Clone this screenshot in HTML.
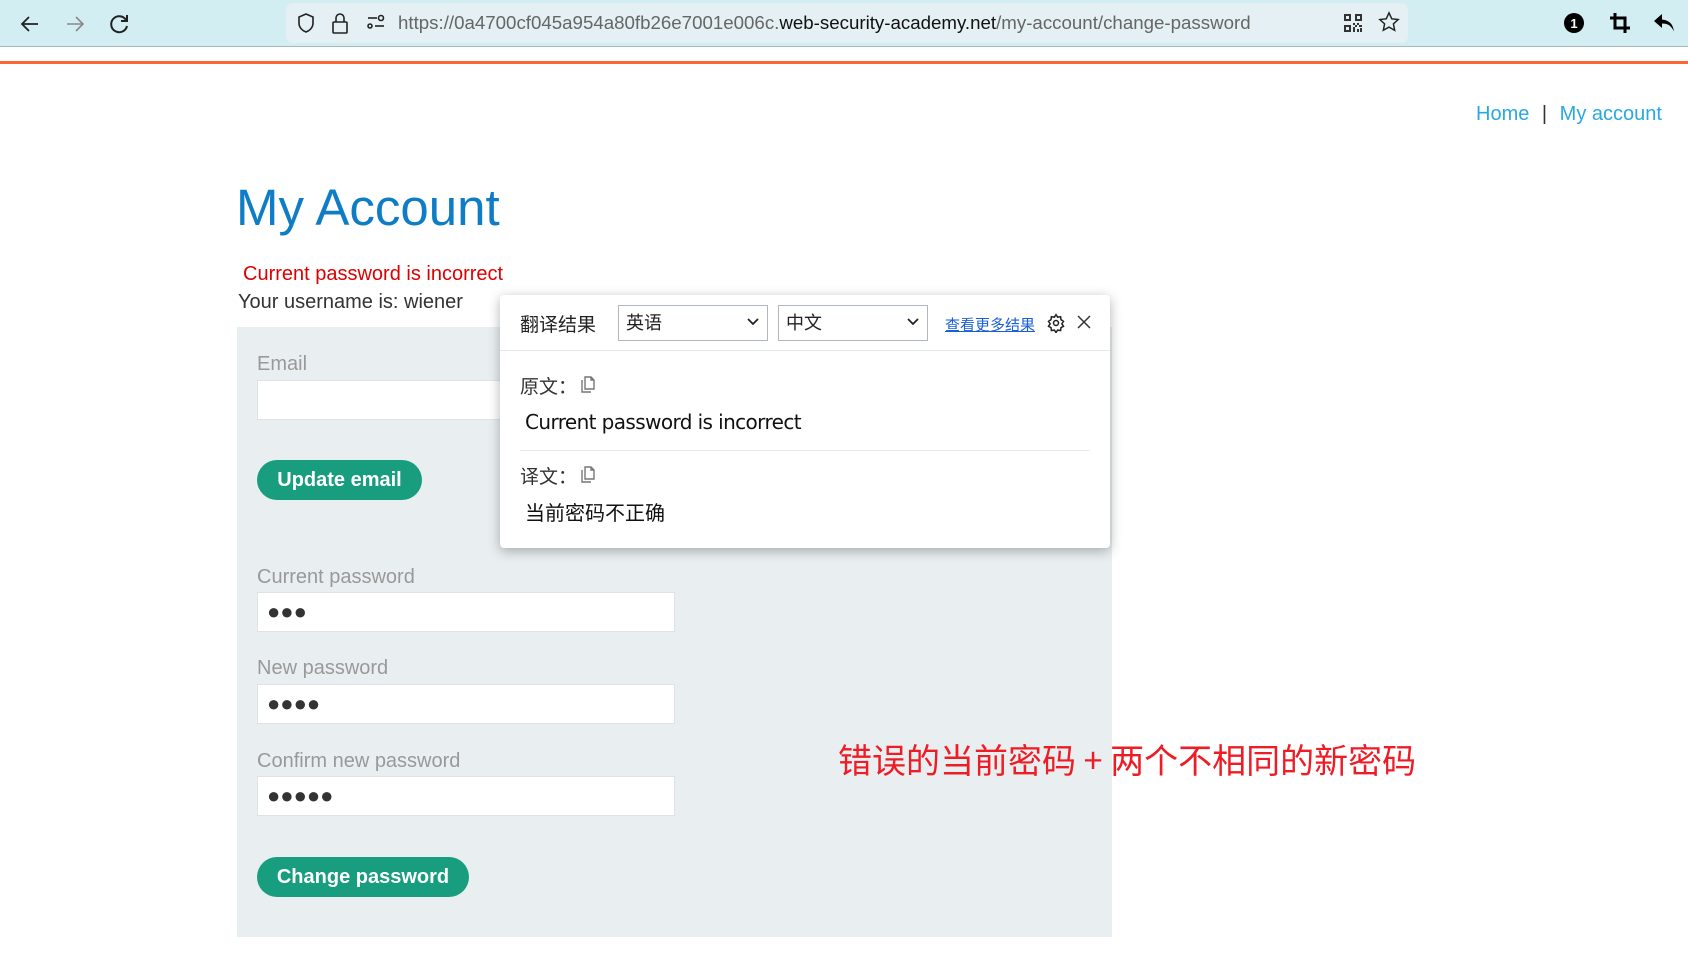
<!DOCTYPE html>
<html><head><meta charset="utf-8"><style>
*{margin:0;padding:0;box-sizing:border-box}
body{width:1688px;height:954px;position:relative;background:#fff;font-family:"Liberation Sans","Noto Sans CJK SC",sans-serif;overflow:hidden}
.a{position:absolute}
.lbl{position:absolute;left:257px;color:#999;font-size:20px}
.inp{position:absolute;left:257px;width:418px;height:40px;background:#fff;border:1px solid #dfe3e6;font-size:22px;color:#333;padding-left:9px;line-height:38px;letter-spacing:0}
.btn{position:absolute;left:257px;height:40px;border-radius:20px;background:#189d7f;color:#fff;font-weight:bold;font-size:20px;line-height:40px;text-align:center}
.sel{position:absolute;top:305px;height:36px;width:150px;border:1px solid #b0b8c4;background:#fff;font-size:18px;line-height:34px;padding-left:7px;color:#222}
.sel svg{position:absolute;right:8px;top:12px}
</style></head><body>
<div class="a" style="left:0;top:0;width:1688px;height:47px;background:#d3eef3;border-bottom:1px solid #a8b8bc"></div>
<svg class="a" style="left:18px;top:12px" width="24" height="24" viewBox="0 0 24 24" fill="none" stroke="#222" stroke-width="1.8"><path d="M20 12H5M11 5l-7 7 7 7"/></svg>
<svg class="a" style="left:63px;top:12px" width="24" height="24" viewBox="0 0 24 24" fill="none" stroke="#888" stroke-width="1.6"><path d="M4 12h15M13 5l7 7-7 7"/></svg>
<svg class="a" style="left:108px;top:12px" width="24" height="24" viewBox="0 0 24 24" fill="none" stroke="#222" stroke-width="2"><path d="M18 8a8 8 0 1 0 1 6"/><path d="M19 3v6h-6"/></svg>
<div class="a" style="left:286px;top:3px;width:1122px;height:40px;background:#e4f0f3;border-radius:7px"></div>
<svg class="a" style="left:296px;top:12px" width="20" height="22" viewBox="0 0 20 22" fill="none" stroke="#222" stroke-width="1.6"><path d="M10 2l7 3v6c0 5-4 8-7 9-3-1-7-4-7-9V5z"/></svg>
<svg class="a" style="left:331px;top:11px" width="18" height="24" viewBox="0 0 18 24" fill="none" stroke="#222" stroke-width="1.6"><rect x="2" y="11" width="14" height="11" rx="1"/><path d="M5 11V7a4 4 0 0 1 8 0v4"/></svg>
<svg class="a" style="left:366px;top:14px" width="20" height="16" viewBox="0 0 20 16" fill="none" stroke="#222" stroke-width="1.6"><path d="M2 4h9"/><circle cx="15" cy="4" r="2.5"/><circle cx="4" cy="12" r="2"/><path d="M9 12h9"/></svg>
<div class="a" style="left:398px;top:12px;font-size:18.7px;color:#666;white-space:nowrap">https://0a4700cf045a954a80fb26e7001e006c.<span style="color:#111">web-security-academy.net</span>/my-account/change-password</div>
<svg class="a" style="left:1344px;top:14px" width="18" height="18" viewBox="0 0 18 18" fill="#333"><path d="M0 0h7v7H0zM2 2v3h3V2zM11 0h7v7h-7zM13 2v3h3V2zM0 11h7v7H0zM2 13v3h3v-3zM9 9h2v2H9zM13 9h2v2h-2zM11 11h2v2h-2zM15 11h3v2h-3zM9 13h2v5H9zM13 15h2v3h-2zM16 14h2v4h-2z"/></svg>
<svg class="a" style="left:1378px;top:11px" width="22" height="22" viewBox="0 0 24 24" fill="none" stroke="#222" stroke-width="1.6"><path d="M12 2l3 6.5 7 .8-5.2 4.8 1.4 7L12 17.6 5.8 21l1.4-7L2 9.3l7-.8z"/></svg>
<svg class="a" style="left:1563px;top:12px" width="22" height="22" viewBox="0 0 22 22"><circle cx="11" cy="11" r="10" fill="#000"/><text x="11" y="16" font-size="13" font-weight="bold" fill="#fff" text-anchor="middle" font-family="Liberation Sans">1</text></svg>
<svg class="a" style="left:1609px;top:12px" width="22" height="22" viewBox="0 0 22 22" fill="none" stroke="#000" stroke-width="3"><path d="M6 1v15h15M1 6h15v15"/></svg>
<svg class="a" style="left:1653px;top:12px" width="24" height="22" viewBox="0 0 24 22"><path d="M9 2L1 9l8 7v-4.5c6 0 9 2 12 8-1-7-4-11-12-12z" fill="#000"/></svg>
<div class="a" style="left:0;top:61px;width:1688px;height:3px;background:#ff6633"></div>

<div class="a" style="left:1476px;top:103px;font-size:20px;color:#29a9e1;white-space:nowrap">Home <span style="color:#333;margin:0 7px">|</span> My account</div>
<div class="a" style="left:236px;top:178px;font-size:51px;color:#0f7dc6">My Account</div>
<div class="a" style="left:243px;top:263px;font-size:20px;color:#d00">Current password is incorrect</div>
<div class="a" style="left:238px;top:291px;font-size:20px;color:#333">Your username is: wiener</div>

<div class="a" style="left:237px;top:327px;width:875px;height:610px;background:#e9eff1"></div>
<div class="lbl" style="top:353px">Email</div>
<div class="inp" style="top:380px"></div>
<div class="btn" style="top:460px;width:165px">Update email</div>
<div class="lbl" style="top:566px">Current password</div>
<div class="inp" style="top:592px">●●●</div>
<div class="lbl" style="top:657px">New password</div>
<div class="inp" style="top:684px">●●●●</div>
<div class="lbl" style="top:750px">Confirm new password</div>
<div class="inp" style="top:776px">●●●●●</div>
<div class="btn" style="top:857px;width:212px">Change password</div>

<div class="a" style="left:838px;top:734px;font-size:34px;color:#ee1c25;white-space:nowrap;font-family:'Noto Sans CJK SC',sans-serif">错误的当前密码 + 两个不相同的新密码</div>

<div class="a" style="left:500px;top:295px;width:610px;height:253px;background:#fff;border-radius:4px;box-shadow:0 3px 12px rgba(0,0,0,.3)"></div>
<div class="a" style="left:500px;top:350px;width:610px;height:1px;background:#e8e8e8"></div>
<div class="a" style="left:520px;top:310px;font-size:19px;color:#222;font-family:'Noto Sans CJK SC',sans-serif">翻译结果</div>
<div class="sel" style="left:618px">英语<svg width="12" height="8" viewBox="0 0 12 8" fill="none" stroke="#222" stroke-width="1.8"><path d="M1 1l5 5 5-5"/></svg></div>
<div class="sel" style="left:778px">中文<svg width="12" height="8" viewBox="0 0 12 8" fill="none" stroke="#222" stroke-width="1.8"><path d="M1 1l5 5 5-5"/></svg></div>
<div class="a" style="left:945px;top:314px;font-size:15px;color:#1a5fd6;text-decoration:underline;font-family:'Noto Sans CJK SC',sans-serif">查看更多结果</div>
<svg class="a" style="left:1046px;top:313px" width="20" height="20" viewBox="0 0 24 24" fill="none" stroke="#222" stroke-width="1.8"><circle cx="12" cy="12" r="3"/><path d="M12 2l2 3 3.5-.5.5 3.5 3 2-2 3 2 3-3 1.5-.5 3.5-3.5-.5-2 3-2-3-3.5.5-.5-3.5-3-1.5 2-3-2-3 3-2 .5-3.5L10 5z"/></svg>
<svg class="a" style="left:1077px;top:315px" width="14" height="14" viewBox="0 0 14 14" stroke="#333" stroke-width="1.5"><path d="M1 1l12 12M13 1L1 13"/></svg>
<div class="a" style="left:520px;top:372px;font-size:19px;color:#333;font-family:'Noto Sans CJK SC',sans-serif">原文：</div>
<svg class="a" style="left:581px;top:376px" width="14" height="17" viewBox="0 0 14 17" fill="none" stroke="#777" stroke-width="1.4"><path d="M4 1h6l3 3v9H4zM10 1v3h3M1 4v12h9"/></svg>
<div class="a" style="left:525px;top:410px;font-size:20px;color:#111;font-family:'DejaVu Sans',sans-serif;letter-spacing:-.6px">Current password is incorrect</div>
<div class="a" style="left:520px;top:450px;width:570px;height:1px;background:#eaeaea"></div>
<div class="a" style="left:520px;top:462px;font-size:19px;color:#333;font-family:'Noto Sans CJK SC',sans-serif">译文：</div>
<svg class="a" style="left:581px;top:466px" width="14" height="17" viewBox="0 0 14 17" fill="none" stroke="#777" stroke-width="1.4"><path d="M4 1h6l3 3v9H4zM10 1v3h3M1 4v12h9"/></svg>
<div class="a" style="left:525px;top:497px;font-size:20px;color:#111;font-family:'Noto Sans CJK SC',sans-serif">当前密码不正确</div>
</body></html>
